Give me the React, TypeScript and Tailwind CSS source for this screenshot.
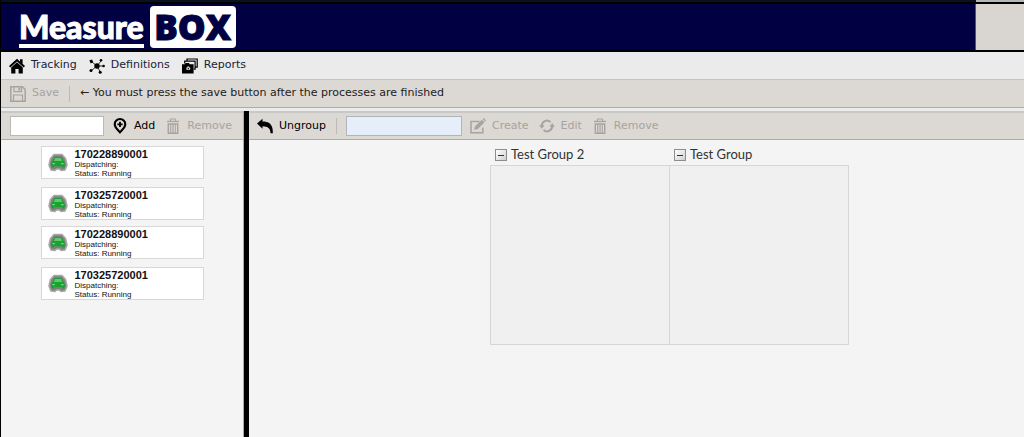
import type { ReactNode } from 'react';

type Vehicle = { key: number; serial: string; status: string };

const vehicles: Vehicle[] = [
  { key: 1, serial: '170228890001', status: 'Running' },
  { key: 2, serial: '170325720001', status: 'Running' },
  { key: 3, serial: '170228890001', status: 'Running' },
  { key: 4, serial: '170325720001', status: 'Running' },
];

const groups = ['Test Group 2', 'Test Group'];

function Icon({ children }: { children: ReactNode }) {
  return (
    <svg viewBox="0 0 16 16" className="size-4 shrink-0" fill="currentColor" aria-hidden="true">
      {children}
    </svg>
  );
}

function HomeIcon() {
  return (
    <Icon>
      <path d="M8 .8 11 3.400V1.200h2.600v4.500L16 8l-1.300 1.500L8 3.500 1.300 9.500 0 8z" />
      <path d="M8 4.300 13.800 9.600V15.500H9.600v-4.600H6.400v4.600H2.200V9.600z" />
    </Icon>
  );
}

function NetworkIcon() {
  return (
    <Icon>
      <path d="M8 8 3 4M8 8l4-5M8 8h6M8 8l3 5.500M8 8l-5.500 4.500" stroke="currentColor" strokeWidth=".8" />
      <circle cx="8" cy="8" r="2.700" />
      <path d="M.3 2.500 3 1.600l1.200 2.500-2.400 1.300z" />
      <circle cx="12" cy="2.200" r="1.300" />
      <circle cx="14.600" cy="8" r="1.300" />
      <circle cx="11.200" cy="14.200" r="1.500" />
      <circle cx="2" cy="12.400" r="1.500" />
    </Icon>
  );
}

function ReportsIcon() {
  return (
    <Icon>
      <path d="M5 3.200V1h10.200v8.200h-1.600M2.700 5.400V3.200h10.400v8h-1.400" fill="none" stroke="currentColor" strokeWidth="1.200" />
      <path d="M0 6.200h2.800l.8-1.200h3.400l.8 1.200h3.800v9.300H0z" />
      <path d="M4.400 9.400h1V8.600h1.800v.8h1v2.400H4.400z" fill="#ebebeb" />
      <circle cx="6.300" cy="10.500" r=".7" />
    </Icon>
  );
}

function SaveIcon() {
  return (
    <Icon>
      <path d="M.8.8h11.700l2.700 2.700v11.700H.8z" fill="none" stroke="currentColor" strokeWidth="1.500" />
      <path d="M4 1v4.600h7.600V1M3.500 15V9h9v6" fill="none" stroke="currentColor" strokeWidth="1.200" />
      <path d="M8.400 1.500h2v3h-2z" />
    </Icon>
  );
}

function MarkerIcon() {
  return (
    <Icon>
      <path
        fillRule="evenodd"
        d="M8 0a6.300 6.300 0 0 1 6.300 6.300C14.300 10 10.400 13 8 16 5.600 13 1.700 10 1.700 6.300A6.300 6.300 0 0 1 8 0zm0 2a4.200 4.200 0 0 0-4.200 4.200C3.800 8.600 6.400 10.700 8 12.800c1.600-2.100 4.200-4.200 4.200-6.600A4.200 4.200 0 0 0 8 2z"
      />
      <path d="M7.100 3.700h1.800v1.700h1.700v1.800H8.900v1.700H7.100V7.200H5.400V5.400h1.700z" />
    </Icon>
  );
}

function TrashIcon() {
  return (
    <Icon>
      <path d="M5.400 3V1h5.200v2" fill="none" stroke="currentColor" strokeWidth="1" />
      <path d="M2 2.800h12v1.300H2z" />
      <path fillRule="evenodd" d="M2.600 5.200h10.800V16H2.600zM4 6.800v7.600h1.200V6.800zm2.300 0v7.600h1.200V6.800zm2.300 0v7.600h1.200V6.800zm2.200 0v7.600H12V6.800z" />
    </Icon>
  );
}

function UngroupIcon() {
  return (
    <Icon>
      <path d="M0 5.600 5.500.8v2.700c6 0 10.800 2.200 10.300 11.700h-2.300C13.500 10.500 11 8.500 5.500 8.300v2.500z" />
    </Icon>
  );
}

function CreateIcon() {
  return (
    <Icon>
      <path d="M9.500 3.400H1v11.400h11.800V9.500" fill="none" stroke="currentColor" strokeWidth="1.500" />
      <path d="m4.200 11.800.9-3.600 6.800-6.500 2.600 2.600-6.700 6.600zM12.600 1l1-1 2.400 2.500-1 1z" />
    </Icon>
  );
}

function EditIcon() {
  return (
    <Icon>
      <path d="M2.800 8A5.200 5.200 0 0 1 11.500 4M13.200 8A5.200 5.200 0 0 1 4.500 12" fill="none" stroke="currentColor" strokeWidth="1.900" />
      <path d="M0 7.200h5.600L2.800 10.800zM16 8.800h-5.600l2.800-3.600z" />
    </Icon>
  );
}

function CarIcon() {
  return (
    <svg viewBox="0 0 20 20" className="size-5 shrink-0" aria-hidden="true">
      <path d="M6 1.500h8l3.500 4L19 12l-2 5-4 .5-1.500-1.500h-3L7 17.500 3 17l-2-5 1.500-6.500z" fill="#808080" stroke="#a9a9a9" strokeWidth="1.600" strokeLinejoin="round" />
      <path d="M6.500 4h7l1.800 3.800 1.400 1.700V14.500H14v-1.300H6v1.300H3.300V9.500l1.400-1.700z" fill="#1aa332" />
      <path d="M7 5h6l1 3H6z" fill="#5cc96b" />
      <path d="M4.500 10h2.300v1.200H4.500zM13.200 10h2.300v1.200h-2.300z" fill="#7edc8b" />
    </svg>
  );
}

function ToolButton({ icon, label, disabled }: { icon: ReactNode; label: string; disabled?: boolean }) {
  return (
    <button type="button" disabled={disabled} className="flex items-center gap-1.5 text-black disabled:text-[#a6a4a1]">
      {icon}
      {label}
    </button>
  );
}

function Separator() {
  return <span className="h-4 w-px shrink-0 bg-[#bcb9b6]" />;
}

function VehicleCard({ vehicle }: { vehicle: Vehicle }) {
  return (
    <li className="flex h-[33px] w-[163px] items-center border border-[#d9d8d7] bg-white pt-px pl-1.5 odd:mt-1.5 even:mt-2">
      <CarIcon />
      <div className="ml-[7px] text-[8px] leading-[9px] text-[#111]">
        <div className="text-[11px] leading-[11px] font-bold">{vehicle.serial}</div>
        <div>Dispatching:</div>
        <div>Status: {vehicle.status}</div>
      </div>
    </li>
  );
}

function GroupBox({ name }: { name: string }) {
  return (
    <section className="w-[180px] not-first:-ml-px">
      <h2 className="flex h-5 items-center gap-1 pl-[5px] font-['Lato',sans-serif] text-[13px] text-[#333]">
        <button
          type="button"
          aria-label={`Collapse ${name}`}
          className="flex size-3 items-center justify-center border border-[#8d8d8d] bg-linear-to-br from-white to-[#d0d0d0]"
        >
          <span className="h-px w-1.5 bg-[#333]" />
        </button>
        {name}
      </h2>
      <div className="h-[180px] border border-[#d8d6d4] bg-[#f0f0f0]" />
    </section>
  );
}

export default function App() {
  return (
    <div className="flex min-h-screen flex-col border-l border-black bg-[#ebebeb] font-['DejaVu_Sans',sans-serif] text-[11px] text-[#222]">
      {/* Brand bar */}
      <header>
        <div className="flex h-0.5 bg-[#b5b7b6]">
          <div className="mr-12 flex-1 bg-[#08121f]" />
        </div>
        <div className="flex h-[50px] border-y-2 border-black bg-[#d9d5d0]">
          <div className="mr-12 flex flex-1 items-start gap-1.5 border-r border-[#555] bg-[#000042] pl-[18px] text-white">
            <div className="mt-1 h-10 border-b-4 border-white font-['Lato',sans-serif] text-[32px] leading-[38px] font-black [-webkit-text-stroke:1px_white]">
              Measure
            </div>
            <div className="mt-0.5 flex h-[42px] w-[86px] items-center justify-center rounded-sm bg-white font-['Open_Sans',sans-serif] text-[35px] font-extrabold text-[#000042] [-webkit-text-stroke:1px_#000042]">
              BOX
            </div>
          </div>
        </div>
      </header>

      <nav className="flex h-[27px] items-center gap-3 pl-2">
        <a href="#tracking" className="flex items-center gap-1.5 text-[#17233a]">
          <span className="text-black"><HomeIcon /></span>
          Tracking
        </a>
        <a href="#definitions" className="flex items-center gap-1.5 text-[#17233a]">
          <span className="text-black"><NetworkIcon /></span>
          Definitions
        </a>
        <a href="#reports" className="flex items-center gap-1.5 text-[#17233a]">
          <span className="text-black"><ReportsIcon /></span>
          Reports
        </a>
      </nav>

      <div className="flex h-[29px] items-center gap-2.5 border-y border-t-[#c4c4c4] border-b-[#aeacaa] bg-[#dcd8d3] pl-[9px]">
        <ToolButton icon={<SaveIcon />} label="Save" disabled />
        <Separator />
        <p>← You must press the save button after the processes are finished</p>
      </div>

      <main className="mt-[3px] flex flex-1">
        {/* Vehicles */}
        <aside className="w-[243px] shrink-0 border-r border-[#aaa] bg-[#f4f4f4]">
          <div className="flex h-[29px] items-center border-t-2 border-b border-t-[#c8c8c6] border-b-[#aeacaa] bg-[#dcd8d3] pl-[9px]">
            <input type="text" aria-label="Vehicle" className="mr-2 h-5 w-[94px] border border-[#b9b9b9] bg-white px-1" />
            <div className="flex gap-2.5">
              <ToolButton icon={<MarkerIcon />} label="Add" />
              <ToolButton icon={<TrashIcon />} label="Remove" disabled />
            </div>
          </div>
          <ul className="flex flex-col items-center font-['Liberation_Sans',sans-serif]">
            {vehicles.map((vehicle) => (
              <VehicleCard key={vehicle.key} vehicle={vehicle} />
            ))}
          </ul>
        </aside>
        <div className="w-[5px] shrink-0 bg-black" />

        {/* Groups */}
        <div className="min-w-0 flex-1 bg-[#f4f4f4]">
          <div className="flex h-[29px] items-center border-t-2 border-b border-t-[#c8c8c6] border-b-[#aeacaa] bg-[#dcd8d3] pl-2">
            <div className="mr-[9px] flex items-center gap-2.5">
              <ToolButton icon={<UngroupIcon />} label="Ungroup" />
              <Separator />
            </div>
            <input type="text" aria-label="Group name" className="mr-2 h-5 w-[116px] border border-[#b0b5bd] bg-[#e6eefa] px-1" />
            <div className="flex gap-2.5">
              <ToolButton icon={<CreateIcon />} label="Create" disabled />
              <ToolButton icon={<EditIcon />} label="Edit" disabled />
              <ToolButton icon={<TrashIcon />} label="Remove" disabled />
            </div>
          </div>
          <div className="flex justify-center pt-[5px] pl-[66px]">
            {groups.map((name) => (
              <GroupBox key={name} name={name} />
            ))}
          </div>
        </div>
      </main>
    </div>
  );
}
